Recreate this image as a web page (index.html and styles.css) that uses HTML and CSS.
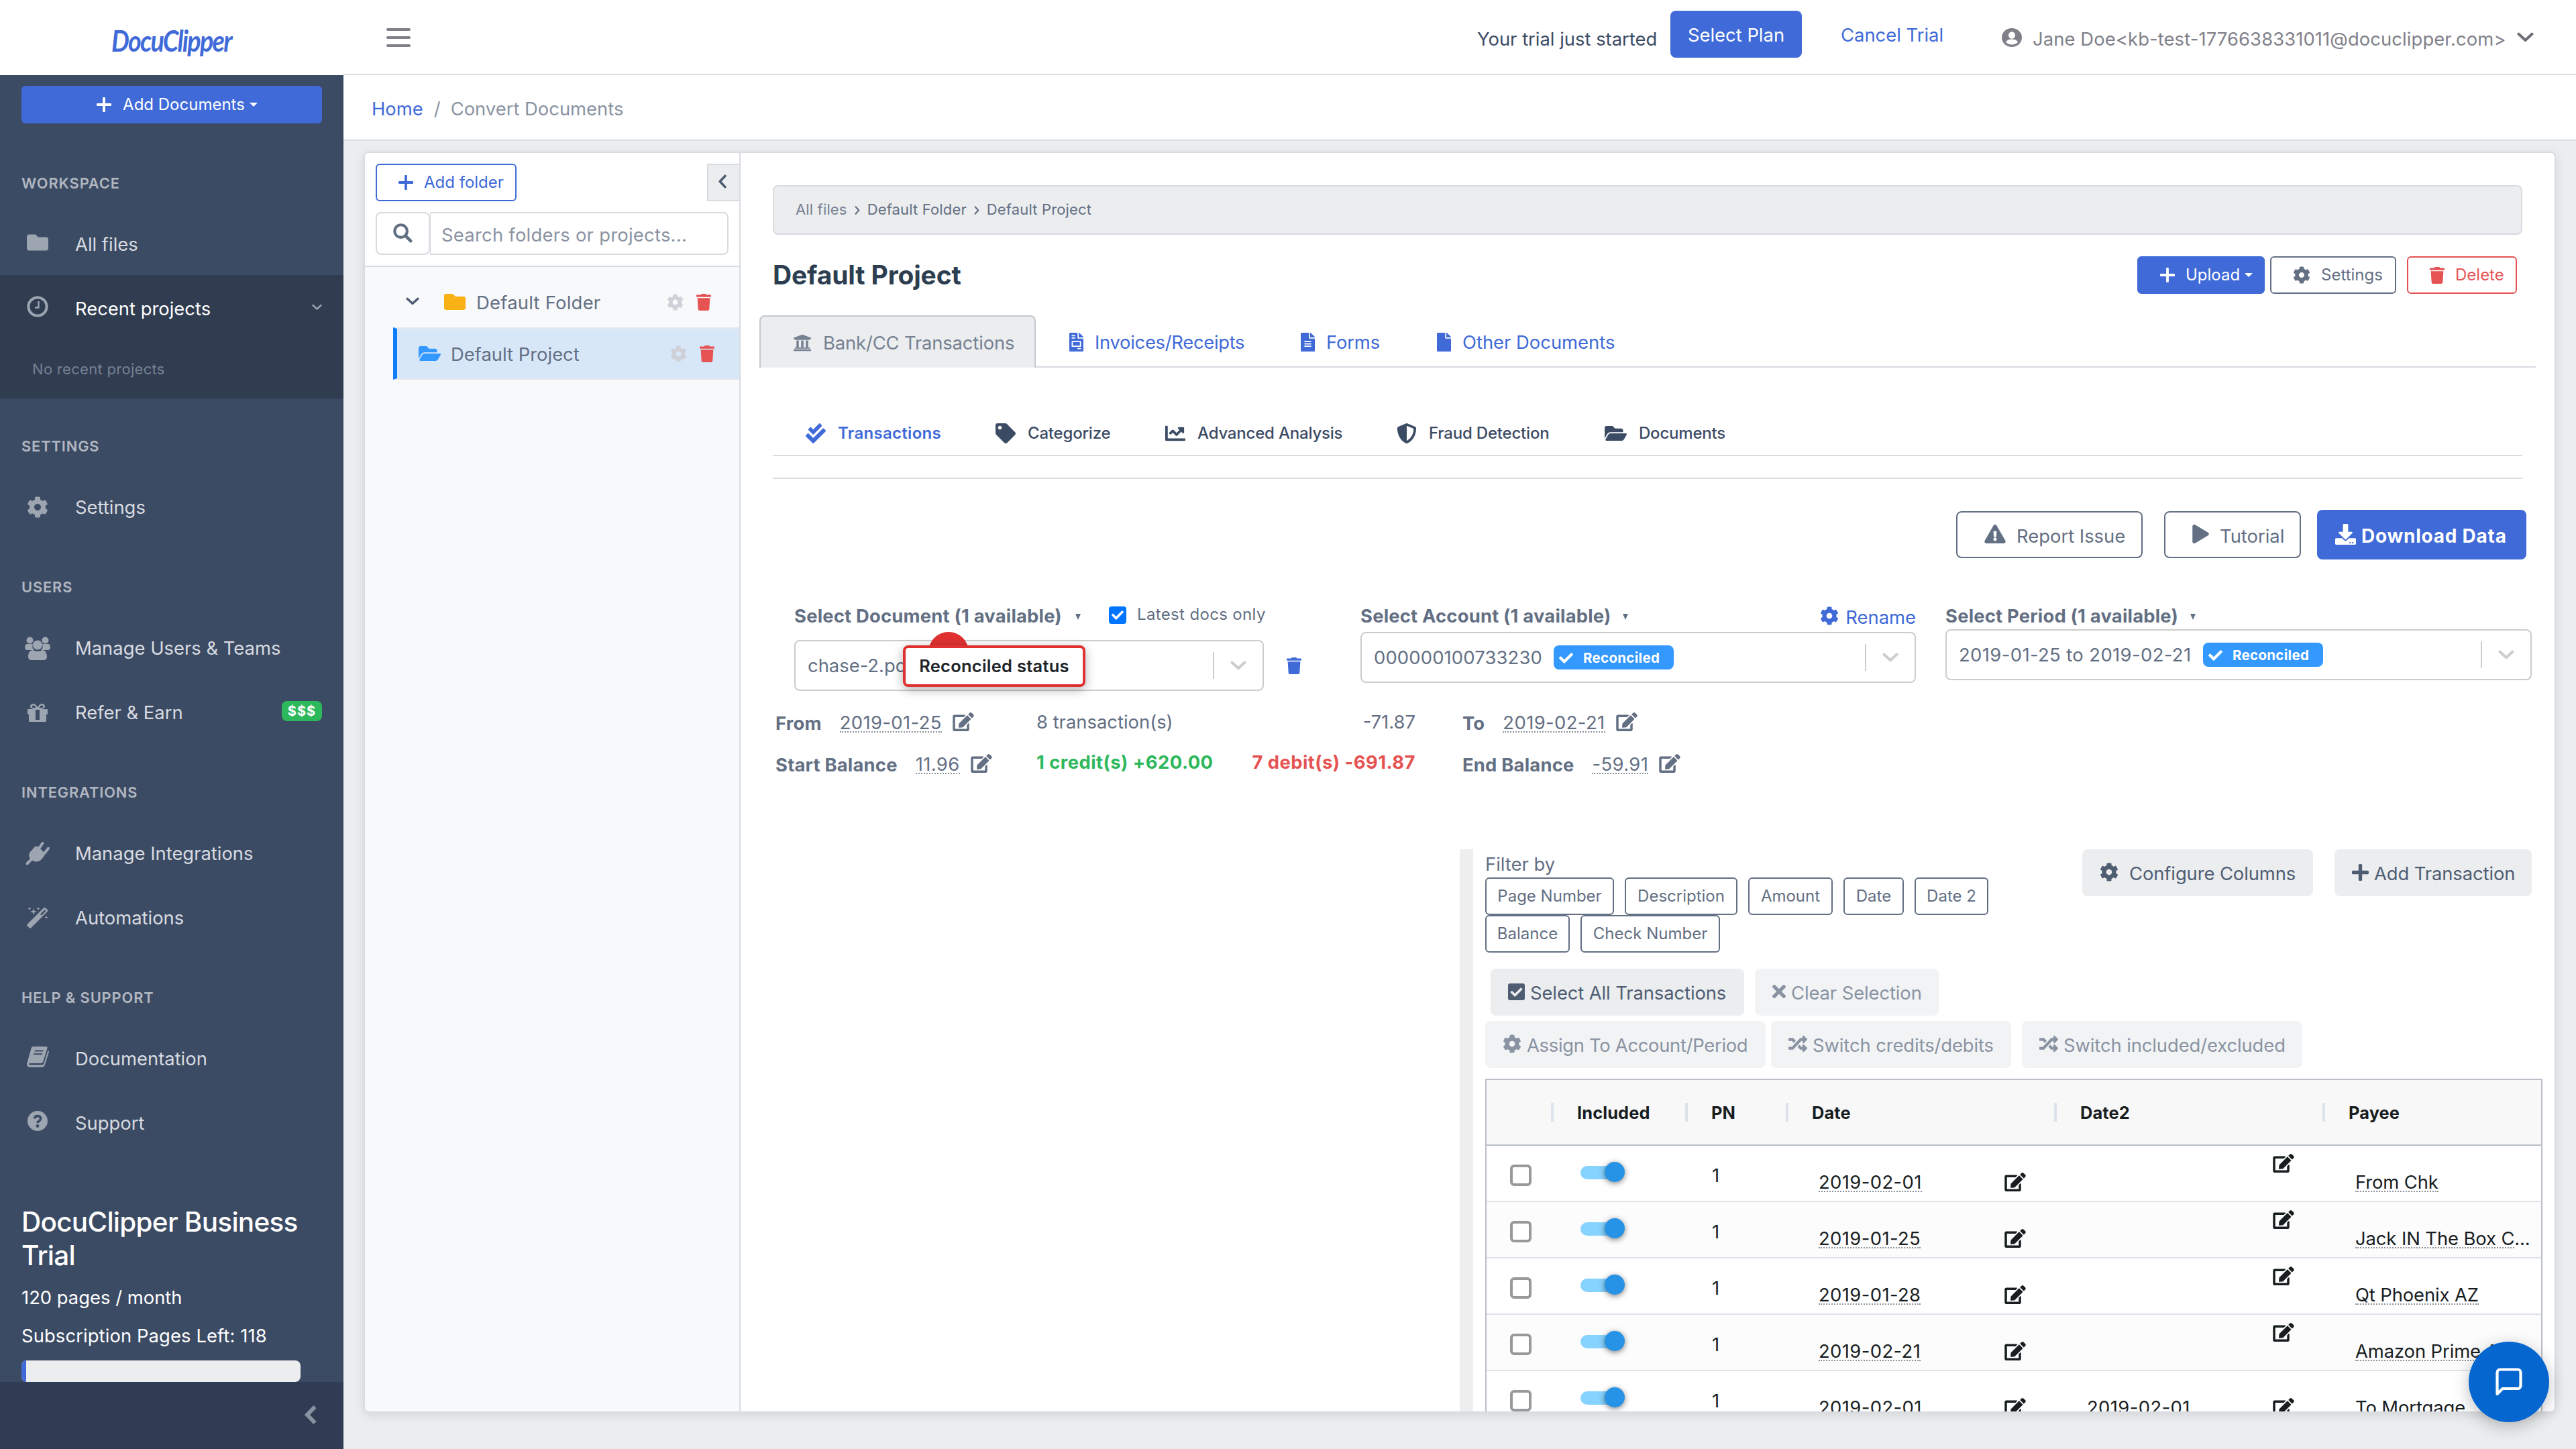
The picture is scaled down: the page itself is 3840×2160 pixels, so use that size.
FILE: index.html
```html
<!DOCTYPE html>
<html lang="en">
<head>
<meta charset="utf-8">
<title>DocuClipper - Convert Documents</title>
<link rel="stylesheet" href="styles.css">
</head>
<body>
<svg class="sprite" xmlns="http://www.w3.org/2000/svg">
  <symbol id="cog" viewBox="0 0 512 512"><path d="M487.4 315.7l-42.6-24.6c4.3-23.2 4.3-47 0-70.2l42.6-24.6c4.9-2.8 7.1-8.6 5.5-14-11.1-35.6-30-67.8-54.7-94.6-3.8-4.1-10-5.1-14.8-2.3L380.8 110c-17.9-15.4-38.5-27.3-60.8-35.1V25.8c0-5.6-3.9-10.5-9.4-11.7-36.7-8.2-74.3-7.8-109.2 0-5.5 1.2-9.4 6.1-9.4 11.7V75c-22.2 7.9-42.8 19.8-60.8 35.1L88.7 85.5c-4.9-2.8-11-1.9-14.8 2.3-24.7 26.7-43.6 58.9-54.7 94.6-1.7 5.4.6 11.2 5.5 14L67.3 221c-4.3 23.2-4.3 47 0 70.2l-42.6 24.6c-4.9 2.8-7.1 8.6-5.5 14 11.1 35.6 30 67.8 54.7 94.6 3.8 4.1 10 5.1 14.8 2.3l42.6-24.6c17.9 15.4 38.5 27.3 60.8 35.1v49.2c0 5.6 3.9 10.5 9.4 11.7 36.7 8.2 74.3 7.8 109.2 0 5.5-1.2 9.4-6.1 9.4-11.7v-49.2c22.2-7.9 42.8-19.8 60.8-35.1l42.6 24.6c4.9 2.8 11 1.9 14.8-2.3 24.7-26.7 43.6-58.9 54.7-94.6 1.5-5.5-.7-11.3-5.6-14.1zM256 336c-44.1 0-80-35.9-80-80s35.9-80 80-80 80 35.9 80 80-35.9 80-80 80z"/></symbol>
  <symbol id="trash" viewBox="0 0 448 512"><path d="M432 32H312l-9.4-18.7A24 24 0 0 0 281.1 0H166.8a23.72 23.72 0 0 0-21.4 13.3L136 32H16A16 16 0 0 0 0 48v32a16 16 0 0 0 16 16h416a16 16 0 0 0 16-16V48a16 16 0 0 0-16-16zM53.2 467a48 48 0 0 0 47.9 45h245.8a48 48 0 0 0 47.9-45L416 128H32z"/></symbol>
  <symbol id="folder" viewBox="0 64 512 384"><path d="M464 128H272l-64-64H48C21.49 64 0 85.49 0 112v288c0 26.51 21.49 48 48 48h416c26.51 0 48-21.49 48-48V176c0-26.51-21.49-48-48-48z"/></symbol>
  <symbol id="folder-open" viewBox="0 64 576 384"><path d="M572.694 292.093L500.27 416.248A63.997 63.997 0 0 1 444.989 448H45.025c-18.523 0-30.064-20.093-20.731-36.093l72.424-124.155A64 64 0 0 1 152 256h399.964c18.523 0 30.064 20.093 20.73 36.093zM152 224h328v-48c0-26.51-21.49-48-48-48H272l-64-64H48C21.49 64 0 85.49 0 112v278.046l69.077-118.418C86.214 242.25 117.989 224 152 224z"/></symbol>
  <symbol id="plus" viewBox="0 32 448 448"><path d="M416 208H272V64c0-17.67-14.33-32-32-32h-32c-17.67 0-32 14.33-32 32v144H32c-17.67 0-32 14.33-32 32v32c0 17.67 14.33 32 32 32h144v144c0 17.67 14.33 32 32 32h32c17.67 0 32-14.33 32-32V304h144c17.67 0 32-14.33 32-32v-32c0-17.67-14.33-32-32-32z"/></symbol>
  <symbol id="plus-thin" viewBox="0 0 22 22"><path d="M9.1 1.400a1.900 1.900 0 0 1 3.800 0v7.700h7.700a1.900 1.900 0 0 1 0 3.800h-7.700v7.700a1.900 1.900 0 0 1-3.800 0v-7.700H1.400a1.900 1.900 0 0 1 0-3.800h7.700z"/></symbol>
  <symbol id="edit" viewBox="0 0 576 512"><path d="M402.6 83.2l90.2 90.2c3.8 3.8 3.8 10 0 13.8L274.4 405.6l-92.8 10.3c-12.4 1.4-22.9-9.1-21.5-21.5l10.3-92.8L388.8 83.2c3.8-3.8 10-3.8 13.8 0zm162-22.9l-48.8-48.8c-15.2-15.2-39.9-15.2-55.2 0l-35.4 35.4c-3.8 3.8-3.8 10 0 13.8l90.2 90.2c3.8 3.8 10 3.8 13.8 0l35.4-35.4c15.2-15.3 15.2-40 0-55.2zM384 346.2V448H64V128h229.8c3.2 0 6.2-1.3 8.5-3.5l40-40c7.6-7.6 2.2-20.5-8.5-20.5H48C21.5 64 0 85.5 0 112v352c0 26.5 21.5 48 48 48h352c26.5 0 48-21.5 48-48V306.2c0-10.7-12.9-16-20.5-8.5l-40 40c-2.2 2.3-3.5 5.3-3.5 8.5z"/></symbol>
  <symbol id="check-double" viewBox="0 0 512 512"><path d="M505 174.8l-39.6-39.6c-9.4-9.4-24.6-9.4-33.9 0L192 374.7 80.6 263.2c-9.4-9.4-24.6-9.4-33.9 0L7 302.9c-9.4 9.4-9.4 24.6 0 34L175 505c9.4 9.4 24.6 9.4 33.9 0l296-296.2c9.4-9.5 9.4-24.7.1-34zm-324.3 106c6.2 6.3 16.4 6.3 22.6 0l208-208.2c6.2-6.3 6.2-16.4 0-22.6L366.1 4.7c-6.2-6.3-16.4-6.3-22.6 0L192 156.2l-55.4-55.5c-6.2-6.3-16.4-6.3-22.6 0L68.7 146c-6.2 6.3-6.2 16.4 0 22.6l112 112.2z"/></symbol>
  <symbol id="tag" viewBox="0 0 512 512"><path d="M0 252.118V48C0 21.49 21.49 0 48 0h204.118a48 48 0 0 1 33.941 14.059l211.882 211.882c18.745 18.745 18.745 49.137 0 67.882L293.823 497.941c-18.745 18.745-49.137 18.745-67.882 0L14.059 286.059A48 48 0 0 1 0 252.118zM112 64c-26.51 0-48 21.49-48 48s21.49 48 48 48 48-21.49 48-48-21.49-48-48-48z"/></symbol>
  <symbol id="chart" viewBox="0 0 512 512"><path d="M496 384H64V80c0-8.84-7.16-16-16-16H16C7.16 64 0 71.16 0 80v336c0 17.67 14.33 32 32 32h464c8.84 0 16-7.16 16-16v-32c0-8.84-7.16-16-16-16zM464 96H345.94c-21.38 0-32.09 25.85-16.97 40.97l32.4 32.4L288 242.75l-73.37-73.37c-12.5-12.5-32.76-12.5-45.25 0l-68.69 68.69c-6.25 6.25-6.25 16.38 0 22.63l22.62 22.62c6.25 6.25 16.38 6.25 22.63 0L192 237.25l73.37 73.37c12.5 12.5 32.76 12.5 45.25 0l96-96 32.4 32.4c15.12 15.12 40.97 4.41 40.97-16.97V112c.01-8.84-7.15-16-15.99-16z"/></symbol>
  <symbol id="shield" viewBox="0 0 512 512"><path d="M466.5 83.7l-192-80a48.15 48.15 0 0 0-36.9 0l-192 80C27.7 91.1 16 108.6 16 128c0 198.5 114.5 335.7 221.5 380.3 11.8 4.9 25.1 4.9 36.9 0C360.1 472.6 496 349.3 496 128c0-19.4-11.7-36.9-29.5-44.3zM256.1 446.3l-.1-381 175.9 73.3c-3.3 151.4-82.1 261.1-175.8 307.7z"/></symbol>
  <symbol id="warning" viewBox="0 0 576 512"><path d="M569.517 440.013C587.975 472.007 564.806 512 527.94 512H48.054c-36.937 0-59.999-40.055-41.577-71.987L246.423 23.985c18.467-32.009 64.72-31.951 83.154 0l239.94 416.028zM288 354c-25.405 0-46 20.595-46 46s20.595 46 46 46 46-20.595 46-46-20.595-46-46-46zm-43.673-165.346l7.418 136c.347 6.364 5.609 11.346 11.982 11.346h48.546c6.373 0 11.635-4.982 11.982-11.346l7.418-136c.375-6.874-5.098-12.654-11.982-12.654h-63.383c-6.884 0-12.356 5.78-11.981 12.654z"/></symbol>
  <symbol id="play" viewBox="0 0 448 512"><path d="M424.4 214.7L72.4 6.6C43.8-10.3 0 6.1 0 47.9V464c0 37.5 40.7 60.1 72.4 41.3l352-208c31.4-18.5 31.5-64.1 0-82.6z"/></symbol>
  <symbol id="download" viewBox="0 0 512 512"><path d="M216 0h80c13.3 0 24 10.7 24 24v168h87.7c17.8 0 26.7 21.5 14.1 34.1L269.7 378.3c-7.5 7.5-19.8 7.5-27.3 0L90.1 226.1c-12.6-12.6-3.7-34.1 14.1-34.1H192V24c0-13.3 10.7-24 24-24zm296 376v112c0 13.3-10.7 24-24 24H24c-13.3 0-24-10.7-24-24V376c0-13.3 10.7-24 24-24h146.7l49 49c20.1 20.1 52.5 20.1 72.6 0l49-49H488c13.3 0 24 10.7 24 24zm-124 88c0-11-9-20-20-20s-20 9-20 20 9 20 20 20 20-9 20-20zm64 0c0-11-9-20-20-20s-20 9-20 20 9 20 20 20 20-9 20-20z"/></symbol>
  <symbol id="check-square" viewBox="0 32 448 448"><path d="M400 480H48c-26.51 0-48-21.49-48-48V80c0-26.51 21.49-48 48-48h352c26.51 0 48 21.49 48 48v352c0 26.51-21.49 48-48 48zm-204.686-98.059l184-184c6.248-6.248 6.248-16.379 0-22.627l-22.627-22.627c-6.248-6.248-16.379-6.249-22.628 0L184 302.745l-70.059-70.059c-6.248-6.248-16.379-6.248-22.628 0l-22.627 22.627c-6.248 6.248-6.248 16.379 0 22.627l104 104c6.249 6.25 16.379 6.25 22.628.001z"/></symbol>
  <symbol id="times" viewBox="0 80 352 352"><path d="M242.72 256l100.07-100.07c12.28-12.28 12.28-32.19 0-44.48l-22.24-22.24c-12.28-12.28-32.19-12.28-44.48 0L176 189.28 75.93 89.21c-12.28-12.28-32.19-12.28-44.48 0L9.21 111.45c-12.28 12.28-12.28 32.19 0 44.48L109.28 256 9.21 356.07c-12.28 12.28-12.28 32.19 0 44.48l22.24 22.24c12.28 12.28 32.2 12.28 44.48 0L176 322.72l100.07 100.07c12.28 12.28 32.2 12.28 44.48 0l22.24-22.24c12.28-12.28 12.28-32.19 0-44.48L242.72 256z"/></symbol>
  <symbol id="random" viewBox="0 0 512 512"><path d="M504.971 359.029c9.373 9.373 9.373 24.569 0 33.941l-80 79.984c-15.01 15.01-40.971 4.49-40.971-16.971V416h-58.785a12.004 12.004 0 0 1-8.773-3.812l-70.556-75.596 53.333-57.143L352 336h32v-39.981c0-21.438 25.943-31.998 40.971-16.971l80 79.981zM12 176h84l52.781 56.551 53.333-57.143-70.556-75.596A11.999 11.999 0 0 0 122.785 96H12c-6.627 0-12 5.373-12 12v56c0 6.627 5.373 12 12 12zm372 0v39.984c0 21.46 25.961 31.98 40.971 16.971l80-79.984c9.373-9.373 9.373-24.569 0-33.941l-80-79.981C409.943 24.021 384 34.582 384 56.019V96h-58.785a12.004 12.004 0 0 0-8.773 3.812L96 336H12c-6.627 0-12 5.373-12 12v56c0 6.627 5.373 12 12 12h110.785c3.326 0 6.503-1.381 8.773-3.812L352 176h32z"/></symbol>
  <symbol id="bank" viewBox="0 0 512 512"><path d="M496 128v16a8 8 0 0 1-8 8h-24v12c0 6.627-5.373 12-12 12H60c-6.627 0-12-5.373-12-12v-12H24a8 8 0 0 1-8-8v-16a8 8 0 0 1 4.941-7.392l232-88a7.996 7.996 0 0 1 6.118 0l232 88A8 8 0 0 1 496 128zm-24 304H40c-13.255 0-24 10.745-24 24v16a8 8 0 0 0 8 8h464a8 8 0 0 0 8-8v-16c0-13.255-10.745-24-24-24zM96 192v192H60c-6.627 0-12 5.373-12 12v20h416v-20c0-6.627-5.373-12-12-12h-36V192h-64v192h-64V192h-64v192h-64V192H96z"/></symbol>
  <symbol id="file" viewBox="0 0 384 512"><path d="M224 136V0H24C10.7 0 0 10.7 0 24v464c0 13.3 10.7 24 24 24h336c13.3 0 24-10.7 24-24V160H248c-13.2 0-24-10.8-24-24zm160-14.1v6.1H256V0h6.1c6.4 0 12.5 2.5 17 7l97.9 98c4.5 4.5 7 10.6 7 16.9z"/></symbol>
  <symbol id="file-lines" viewBox="0 0 384 512"><path d="M224 136V0H24C10.7 0 0 10.7 0 24v464c0 13.3 10.7 24 24 24h336c13.3 0 24-10.7 24-24V160H248c-13.2 0-24-10.8-24-24zm64 236c0 6.6-5.4 12-12 12H108c-6.6 0-12-5.4-12-12v-8c0-6.6 5.4-12 12-12h168c6.6 0 12 5.4 12 12v8zm0-64c0 6.6-5.4 12-12 12H108c-6.6 0-12-5.4-12-12v-8c0-6.6 5.4-12 12-12h168c6.6 0 12 5.4 12 12v8zm0-72v8c0 6.6-5.4 12-12 12H108c-6.6 0-12-5.4-12-12v-8c0-6.6 5.4-12 12-12h168c6.6 0 12 5.4 12 12zm96-114.1v6.1H256V0h6.1c6.4 0 12.5 2.5 17 7l97.9 98c4.5 4.5 7 10.6 7 16.9z"/></symbol>
  <symbol id="file-invoice" viewBox="0 0 384 512"><path fill-rule="evenodd" d="M224 136V0H24C10.7 0 0 10.7 0 24v464c0 13.3 10.7 24 24 24h336c13.3 0 24-10.7 24-24V160H248c-13.2 0-24-10.8-24-24zM64 64h96v32H64zM64 128h96v32H64zM224 416h96v32h-96zM80 224h224a16 16 0 0 1 16 16v128a16 16 0 0 1-16 16H80a16 16 0 0 1-16-16V240a16 16 0 0 1 16-16zM96 256v96h192v-96zM384 121.9v6.100H256V0h6.100c6.400 0 12.500 2.500 17 7l97.900 98c4.500 4.500 7 10.600 7 16.900z"/></symbol>
  <symbol id="check" viewBox="0 64 512 384"><path d="M173.898 439.404l-166.4-166.4c-9.997-9.997-9.997-26.206 0-36.204l36.203-36.204c9.997-9.998 26.207-9.998 36.204 0L192 312.69 432.095 72.596c9.997-9.997 26.207-9.997 36.204 0l36.203 36.204c9.997 9.997 9.997 26.206 0 36.204l-294.4 294.401c-9.998 9.997-26.207 9.997-36.204-.001z"/></symbol>
  <symbol id="search" viewBox="0 0 30 30"><g fill="none" stroke="currentColor"><circle cx="12" cy="12" r="9.6" stroke-width="4.2"/><path d="M19 19l8 8" stroke-width="5" stroke-linecap="round"/></g></symbol>
  <symbol id="chev-down" viewBox="0 0 24 14"><path d="M2.500 2.500L12 11.300l9.500-8.800" fill="none" stroke="currentColor" stroke-width="4" stroke-linecap="round" stroke-linejoin="round"/></symbol>
  <symbol id="chev-left" viewBox="0 0 14 24"><path d="M11.500 2.500L2.700 12l8.800 9.500" fill="none" stroke="currentColor" stroke-width="4" stroke-linecap="round" stroke-linejoin="round"/></symbol>
  <symbol id="clock" viewBox="0 0 32 32"><circle cx="16" cy="16" r="13.600" fill="none" stroke="currentColor" stroke-width="4"/><path d="M17.500 8v9.500H12" fill="none" stroke="currentColor" stroke-width="2.400"/></symbol>
  <symbol id="users" viewBox="0 0 38 35"><circle cx="7.500" cy="5.500" r="5"/><circle cx="30.500" cy="5.500" r="5"/><path d="M3 11h9c-1.500 5 0 8 2 9H4c-3 0-4-1.500-4-4s1-5 3-5zM35 11h-9c1.500 5 0 8-2 9h10c3 0 4-1.500 4-4s-1-5-3-5z"/><circle cx="19" cy="12.500" r="7"/><path d="M12 20c4 2.500 10 2.500 14 0 4 0 7 4 7 10 0 3-2 5-5 5H10c-3 0-5-2-5-5 0-6 3-10 7-10z"/></symbol>
  <symbol id="gift" viewBox="0 0 30 27"><path fill-rule="evenodd" d="M1 8h9.500C6 7.500 4 6 4 4c0-2.300 1.800-4 4.300-4 3 0 5 2.500 6.700 5.300C16.700 2.500 18.700 0 21.700 0 24.200 0 26 1.700 26 4c0 2-2 3.500-6.500 4H29c.6 0 1 .4 1 1v7h-2v9.500c0 .8-.7 1.500-1.500 1.500h-23c-.8 0-1.500-.7-1.500-1.500V16H0V9c0-.6.4-1 1-1zm7.300-5.600a1.700 1.700 0 0 0 0 3.500h4.300c-1-2-2.400-3.500-4.300-3.500zm13.400 0c-1.900 0-3.300 1.500-4.300 3.500h4.300a1.700 1.700 0 0 0 0-3.500zM12 9v15h6V9z"/></symbol>
  <symbol id="plug" viewBox="0 0 36 35"><path d="M9 13l4-5c2-2 5-2 7 0l7 7c2 2 2 5 0 7l-3 4c-4 4-10 4.500-14 1.500L4 34c-1.500 1.500-4.500-.5-3.200-3L7 25c-3-4-2-9 2-12z"/><path d="M19.500 10.500l6-8.500M28 17.500l6-8" fill="none" stroke="currentColor" stroke-width="4" stroke-linecap="round"/></symbol>
  <symbol id="wand" viewBox="0 0 32 32"><path fill-rule="evenodd" d="M25 1.500c1-1 2-1 3 0l2.500 2.500c1 1 1 2 0 3L6.500 31c-1 1-2 1-3 0L1 28.500c-1-1-1-2 0-3zm1.500 2.800L20 11l1.800 1.800 6.500-6.700z"/><path d="M10 2l1.200 3.800L15 7l-3.800 1.200L10 12 8.800 8.200 5 7l3.800-1.200zM4 0l.7 1.800L6.500 2.500l-1.800.7L4 5l-.7-1.800L1.500 2.500l1.800-.7zM17 0l.7 1.800 1.800.7-1.800.7L17 5l-.7-1.800-1.800-.7 1.800-.7zM29 13l.7 1.800 1.800.7-1.800.7L29 18l-.7-1.800-1.800-.7 1.800-.7z"/></symbol>
  <symbol id="book" viewBox="0 0 33 31"><path fill-rule="evenodd" d="M10 0h18.500c1.500 0 2.500 1 2 2.500l-6 19.500c-.6 1.700-2 3-4 3H4.500c-2 0-2 2.500 0 2.500H23c1 0 2-.6 2.400-1.700L31.500 6c1.400.6 1.600 1.800 1.200 3l-6 18.800c-.6 1.900-2 3.200-4.200 3.200H5c-3.500 0-6-3-4.700-6.200L6.500 3C7 1.200 8.200 0 10 0zm2 5.500l-.6 2h12.800l.6-2zm-1.500 4.700l-.6 2h12.800l.6-2z"/></symbol>
  <symbol id="help" viewBox="0 0 30 30"><circle cx="15" cy="15" r="15"/><path d="M10.500 11.500c.4-2.500 2.300-3.900 4.600-3.900 2.600 0 4.600 1.500 4.600 3.900 0 3.400-4.600 3.400-4.600 6.500" fill="none" stroke="#3c4b64" stroke-width="3.600"/><circle cx="15" cy="22.500" r="2.400" fill="#3c4b64"/></symbol>
  <symbol id="user" viewBox="0 0 30 28"><ellipse cx="15" cy="14" rx="15" ry="14"/><ellipse cx="15" cy="10.500" rx="5" ry="5.200" fill="#fff"/><path d="M6 21c2-4 5-4.600 9-4.600s7 .6 9 4.600c-5 4.600-13 4.600-18 0z" fill="#fff"/></symbol>
</svg>

<aside class="sidebar">
  <div class="brand"><span class="logo">DocuClipper</span></div>
  <nav class="nav">
    <button class="btn-add"><svg width="22" height="22"><use href="#plus-thin"/></svg><span>Add Documents</span><i class="caret"></i></button>
    <div class="nav-title">WORKSPACE</div>
    <a class="nav-item"><span class="ic"><svg width="32" height="27" class="up"><use href="#folder"/></svg></span>All files</a>
    <div class="nav-group">
      <a class="nav-item active"><span class="ic"><svg width="32" height="32" class="up"><use href="#clock"/></svg></span>Recent projects<svg class="more" width="15" height="10"><use href="#chev-down"/></svg></a>
      <div class="nav-empty">No recent projects</div>
    </div>
    <div class="nav-title">SETTINGS</div>
    <a class="nav-item"><span class="ic"><svg width="32" height="32"><use href="#cog"/></svg></span>Settings</a>
    <div class="nav-title">USERS</div>
    <a class="nav-item"><span class="ic"><svg width="38" height="35"><use href="#users"/></svg></span>Manage Users &amp; Teams</a>
    <a class="nav-item"><span class="ic"><svg width="30" height="27"><use href="#gift"/></svg></span>Refer &amp; Earn<span class="money">$$$</span></a>
    <div class="nav-title">INTEGRATIONS</div>
    <a class="nav-item"><span class="ic"><svg width="36" height="35"><use href="#plug"/></svg></span>Manage Integrations</a>
    <a class="nav-item"><span class="ic"><svg width="32" height="32"><use href="#wand"/></svg></span>Automations</a>
    <div class="nav-title">HELP &amp; SUPPORT</div>
    <a class="nav-item"><span class="ic"><svg width="33" height="31" class="up"><use href="#book"/></svg></span>Documentation</a>
    <a class="nav-item"><span class="ic"><svg width="30" height="30" class="up"><use href="#help"/></svg></span>Support</a>
    <div class="plan">
      <h4>DocuClipper Business<br>Trial</h4>
      <p>120 pages / month</p>
      <p>Subscription Pages Left: 118</p>
      <div class="progress"><div class="progress-bar" style="width:1.600%"></div></div>
    </div>
  </nav>
  <div class="minimizer"><svg width="20" height="30" viewBox="0 0 20 30"><path d="M16.500 3L5 15l11.500 12" fill="none" stroke="currentColor" stroke-width="6"/></svg></div>
</aside>

<div class="main">
  <header class="topbar">
    <div class="burger"><i></i><i></i><i></i></div>
    <span class="trial">Your trial just started</span>
    <button class="btn-plan">Select Plan</button>
    <a class="cancel">Cancel Trial</a>
    <svg class="avatar" width="30" height="28"><use href="#user"/></svg>
    <span class="who">Jane Doe&lt;kb-test-1776638331011@docuclipper.com&gt;</span>
    <svg class="who-chev" width="25" height="15"><use href="#chev-down"/></svg>
  </header>
  <div class="crumbs"><a>Home</a><span class="slash">/</span><span>Convert Documents</span></div>

  <section class="card">
    <aside class="tree">
      <div class="tree-head">
        <div class="tree-tools">
          <button class="btn-folder"><svg width="22" height="22"><use href="#plus-thin"/></svg><span>Add folder</span></button>
          <button class="btn-collapse"><svg width="14" height="21"><use href="#chev-left"/></svg></button>
        </div>
        <div class="search"><span class="search-ic"><svg width="29" height="29"><use href="#search"/></svg></span><span class="search-in">Search folders or projects...</span></div>
      </div>
      <div class="t-row">
        <svg class="t-chev" width="20" height="12"><use href="#chev-down"/></svg>
        <svg class="t-folder" width="32" height="24"><use href="#folder"/></svg>
        <span class="t-name wide">Default Folder</span>
        <svg class="t-cog" width="25" height="25"><use href="#cog"/></svg>
        <svg class="t-trash" width="22" height="25"><use href="#trash"/></svg>
      </div>
      <div class="t-row sel">
        <svg class="t-open" width="33" height="22"><use href="#folder-open"/></svg>
        <span class="t-name">Default Project</span>
        <svg class="t-cog" width="25" height="25"><use href="#cog"/></svg>
        <svg class="t-trash" width="22" height="25"><use href="#trash"/></svg>
      </div>
    </aside>

    <div class="work">
      <div class="path"><span>All files</span><svg width="8" height="13"><use href="#chev-left"/></svg><b>Default Folder</b><svg width="8" height="13"><use href="#chev-left"/></svg><b>Default Project</b></div>
      <div class="title-row">
        <h1>Default Project</h1>
        <button class="sm upload"><svg width="22" height="22"><use href="#plus-thin"/></svg><span>Upload</span><i class="caret"></i></button>
        <button class="sm gray"><svg width="26" height="26"><use href="#cog"/></svg><span>Settings</span></button>
        <button class="sm red"><svg width="22" height="25"><use href="#trash"/></svg><span>Delete</span></button>
      </div>
      <div class="tabs">
        <a class="tab on"><svg width="28" height="28"><use href="#bank"/></svg>Bank/CC Transactions</a>
        <a class="tab"><svg width="21" height="28"><use href="#file-invoice"/></svg>Invoices/Receipts</a>
        <a class="tab"><svg width="21" height="28"><use href="#file-lines"/></svg>Forms</a>
        <a class="tab"><svg width="21" height="28"><use href="#file"/></svg>Other Documents</a>
      </div>
      <div class="subtabs">
        <a class="on"><svg width="30" height="30"><use href="#check-double"/></svg>Transactions</a>
        <a><svg width="30" height="30"><use href="#tag"/></svg>Categorize</a>
        <a><svg width="30" height="30"><use href="#chart"/></svg>Advanced Analysis</a>
        <a><svg width="30" height="30"><use href="#shield"/></svg>Fraud Detection</a>
        <a><svg width="33" height="22"><use href="#folder-open"/></svg>Documents</a>
      </div>
      <div class="rule"></div>
      <div class="actions">
        <button class="act report"><svg width="32" height="28"><use href="#warning"/></svg><span>Report Issue</span></button>
        <button class="act tutorial"><svg width="25" height="28"><use href="#play"/></svg><span>Tutorial</span></button>
        <button class="act dl"><svg width="31" height="31"><use href="#download"/></svg><span>Download Data</span></button>
      </div>

      <div class="filters">
        <div class="f-doc">
          <div class="f-label"><strong>Select Document (1 available)</strong><i class="caret s"></i><span class="cb"><svg width="18" height="14"><use href="#check"/></svg></span><span class="latest">Latest docs only</span></div>
          <div class="f-line">
            <div class="select"><span>chase-2.pdf</span><i class="sep"></i><svg class="s-chev" width="24" height="14"><use href="#chev-down"/></svg>
              <div class="dot"></div><div class="tip">Reconciled status</div>
            </div>
            <svg class="del" width="22" height="25"><use href="#trash"/></svg>
          </div>
        </div>
        <div class="f-acc">
          <div class="f-label"><strong>Select Account (1 available)</strong><i class="caret s"></i><span class="rename"><svg width="28" height="28"><use href="#cog"/></svg>Rename</span></div>
          <div class="select"><span class="acc">000000100733230</span><em class="badge"><svg width="21" height="16"><use href="#check"/></svg>Reconciled</em><i class="sep"></i><svg class="s-chev" width="24" height="14"><use href="#chev-down"/></svg></div>
        </div>
        <div class="f-per">
          <div class="f-label"><strong>Select Period (1 available)</strong><i class="caret s"></i></div>
          <div class="select"><span class="per">2019-01-25 to 2019-02-21</span><em class="badge"><svg width="21" height="16"><use href="#check"/></svg>Reconciled</em><i class="sep"></i><svg class="s-chev" width="24" height="14"><use href="#chev-down"/></svg></div>
        </div>
      </div>

      <div class="summary">
        <div class="s-col a">
          <div><strong>From</strong><u>2019-01-25</u><svg width="32" height="28"><use href="#edit"/></svg></div>
          <div><strong>Start Balance</strong><u>11.96</u><svg width="32" height="28"><use href="#edit"/></svg></div>
        </div>
        <div class="s-col b">
          <div><span>8 transaction(s)</span><span>-71.87</span></div>
          <div><strong class="green">1 credit(s) +620.00</strong><strong class="redt">7 debit(s) -691.87</strong></div>
        </div>
        <div class="s-col c">
          <div><strong>To</strong><u>2019-02-21</u><svg width="32" height="28"><use href="#edit"/></svg></div>
          <div><strong>End Balance</strong><u>-59.91</u><svg width="32" height="28"><use href="#edit"/></svg></div>
        </div>
      </div>

      <div class="lower">
        <div class="gutter"></div>
        <div class="grid-side">
          <div class="g-top">
            <div class="filter-by">
              <div class="fb-label">Filter by</div>
              <div class="chips"><button class="w1">Page Number</button><button class="w2">Description</button><button class="w3">Amount</button><button class="w4">Date</button><button class="w5">Date 2</button><button class="w6">Balance</button><button class="w7">Check Number</button></div>
            </div>
            <button class="lt conf"><svg width="28" height="28"><use href="#cog"/></svg>Configure Columns</button>
            <button class="lt addt"><svg width="25" height="25"><use href="#plus"/></svg>Add Transaction</button>
          </div>
          <div class="g-sel">
            <button class="lt all"><svg width="25" height="25"><use href="#check-square"/></svg>Select All Transactions</button>
            <button class="lt off clr"><svg width="20" height="20"><use href="#times"/></svg>Clear Selection</button>
          </div>
          <div class="g-bulk">
            <button class="lt off asg"><svg width="28" height="28"><use href="#cog"/></svg>Assign To Account/Period</button>
            <button class="lt off swc"><svg width="28" height="28"><use href="#random"/></svg>Switch credits/debits</button>
            <button class="lt off swi"><svg width="28" height="28"><use href="#random"/></svg>Switch included/excluded</button>
          </div>
          <div class="table">
            <div class="tr th"><div><i></i></div><div>Included<i></i></div><div>PN<i></i></div><div>Date<i></i></div><div>Date2<i></i></div><div>Payee</div></div>
            <div class="tr"><div class="c0"><i class="box"></i></div><div class="c1"><i class="toggle"></i></div><div class="c2">1</div><div class="c3"><u>2019-02-01</u><svg width="32" height="28"><use href="#edit"/></svg></div><div class="c3 empty"><svg width="32" height="28"><use href="#edit"/></svg></div><div class="c3 payee"><u>From Chk</u></div></div>
            <div class="tr odd"><div class="c0"><i class="box"></i></div><div class="c1"><i class="toggle"></i></div><div class="c2">1</div><div class="c3"><u>2019-01-25</u><svg width="32" height="28"><use href="#edit"/></svg></div><div class="c3 empty"><svg width="32" height="28"><use href="#edit"/></svg></div><div class="c3 payee"><u>Jack IN The Box C</u><span>...</span></div></div>
            <div class="tr"><div class="c0"><i class="box"></i></div><div class="c1"><i class="toggle"></i></div><div class="c2">1</div><div class="c3"><u>2019-01-28</u><svg width="32" height="28"><use href="#edit"/></svg></div><div class="c3 empty"><svg width="32" height="28"><use href="#edit"/></svg></div><div class="c3 payee"><u>Qt Phoenix AZ</u></div></div>
            <div class="tr odd"><div class="c0"><i class="box"></i></div><div class="c1"><i class="toggle"></i></div><div class="c2">1</div><div class="c3"><u>2019-02-21</u><svg width="32" height="28"><use href="#edit"/></svg></div><div class="c3 empty"><svg width="32" height="28"><use href="#edit"/></svg></div><div class="c3 payee"><u>Amazon Prime A</u></div></div>
            <div class="tr"><div class="c0"><i class="box"></i></div><div class="c1"><i class="toggle"></i></div><div class="c2">1</div><div class="c3"><u>2019-02-01</u><svg width="32" height="28"><use href="#edit"/></svg></div><div class="c3"><u>2019-02-01</u><svg width="32" height="28"><use href="#edit"/></svg></div><div class="c3 payee"><u>To Mortgage</u></div></div>
          </div>
        </div>
      </div>
    </div>
  </section>
</div>
<div class="chat"><svg width="44" height="44" viewBox="0 0 44 44"><path d="M4.500 40V8a4.500 4.500 0 0 1 4.500-4.500h26A4.500 4.500 0 0 1 39.500 8v19.500A4.500 4.500 0 0 1 35 32H12.500z" fill="none" stroke="#fff" stroke-width="4.200" stroke-linejoin="round"/></svg></div>
</body>
</html>
```
FILE: styles.css
```css
* { box-sizing: border-box; }
html, body { margin: 0; height: 2160px; overflow: hidden; }
body {
  display: flex; width: 3840px; background: #ebedef; color: #3c4b64;
  font-family: Inter, "Liberation Sans", sans-serif; font-size: 27.400px; line-height: 40px;
}
button { font: inherit; color: inherit; background: none; border: 0; padding: 0; margin: 0; display: flex; align-items: center; white-space: nowrap; flex: none; }
svg { fill: currentColor; flex: none; display: block; }
i { display: block; flex: none; }
strong { font-weight: 700; letter-spacing: .2px; }
span, strong, u { white-space: nowrap; }
u { text-decoration: none; border-bottom: 2px dotted #8d929a; line-height: 25px; height: 27px; letter-spacing: .4px; }
.sprite { position: absolute; width: 0; height: 0; }
.caret { width: 0; height: 0; border: 6px solid transparent; border-top: 6.500px solid currentColor; border-bottom: 0; }
.caret.s { border-width: 9px 4.500px 0; margin: 3px 0 0 11px; }

/* sidebar */
.sidebar { width: 512px; height: 2160px; flex: none; display: flex; flex-direction: column; background: #3c4b64; color: #d8dbe0; }
.brand { height: 112px; flex: none; background: #fff; padding: 34px 0 0 166px; }
.logo { display: block; font-family: Lato, sans-serif; font-style: italic; font-weight: 700; font-size: 43px; line-height: 54px; letter-spacing: -2px; color: #3f6ad8; width: 220px; transform: scaleX(.88); transform-origin: 0 50%; }
.nav { flex: 1; min-height: 0; display: flex; flex-direction: column; padding-top: 16px; overflow: hidden; }
.btn-add { width: 448px; height: 56px; margin: 0 32px 16px; padding-left: 112px; border-radius: 6px; background: #3f6ad8; color: #fff; font-size: 24px; }
.btn-add span { margin-left: 16px; width: 184px; }
.btn-add .caret { margin-left: 6px; }
.nav-title { height: 114px; flex: none; padding: 53px 32px 0; font-size: 21.800px; font-weight: 600; letter-spacing: .9px; color: #b1b7c1; }
.nav-item { height: 96px; flex: none; display: flex; align-items: center; padding: 4px 32px 0 0; }
.nav-item .ic { width: 112px; display: flex; justify-content: center; color: #9da5b1; }
.nav-item .up { position: relative; top: -3px; }
.nav-group { flex: none; background: #303c50; margin-bottom: -2px; height: 184px; }
.nav-item.active { color: #fff; }
.more { margin-left: auto; margin-top: -4px; color: #9da5b1; }
.nav-empty { padding: 24px 48px; font-size: 22px; letter-spacing: .3px; color: #768192; }
.money { margin-left: auto; margin-top: -4px; width: 60px; height: 30px; line-height: 30px; text-align: center; border-radius: 8px; background: #2eb85c; color: #fff; font-size: 20px; font-weight: 700; letter-spacing: 1px; }
.plan { padding: 77px 32px 0; color: #fff; }
.plan h4 { margin: 0; font-size: 40.500px; font-weight: 500; line-height: 50px; letter-spacing: -.75px; white-space: nowrap; }
.plan p { margin: 17px 0 17px; white-space: nowrap; height: 40px; }
.plan p + p { margin: 17px 0 17px; letter-spacing: .1px; }
.progress { width: 416px; height: 32px; border-radius: 8px; background: #ebedef; overflow: hidden; }
.progress-bar { height: 32px; background: #3f6ad8; }
.minimizer { height: 100px; flex: none; background: #303c54; color: #8a93a2; padding: 34px 0 0 453px; }

/* header */
.main { width: 3328px; height: 2160px; display: flex; flex-direction: column; }
.topbar { height: 112px; flex: none; background: #fff; border-bottom: 2px solid #d8dbe0; display: flex; align-items: flex-start; }
.burger { width: 36px; margin: 42px 0 0 64px; display: flex; flex-direction: column; gap: 8px; }
.burger i { height: 4px; border-radius: 2px; background: #807f8a; }
.trial { margin: 38px 0 0 1590px; width: 288px; }
.btn-plan { margin-top: 16px; width: 196px; height: 70px; border-radius: 8px; background: #3f6ad8; color: #fff; justify-content: center; padding-top: 2px; }
.cancel { margin: 32px 0 0 58px; width: 240px; color: #3f6ad8; }
.avatar { margin-top: 42px; color: #80808a; }
.who { margin: 38px 0 0 16px; width: 722px; color: #80808a; letter-spacing: .1px; }
.who-chev { margin-top: 48px; color: #6e6d78; }
.crumbs { height: 98px; flex: none; background: #fff; border-bottom: 2px solid #d8dbe0; padding: 30px 0 0 42px; display: flex; color: #8a93a2; }
.crumbs a { color: #3f6ad8; }
.slash { margin: 0 15px 0 16px; color: #8a93a2; }

/* card */
.card { margin: 16px 30px 0; height: 1880px; width: 3268px; flex: none; display: flex; background: #fff; border: 2px solid #d8dbe0; border-radius: 8px; overflow: hidden; box-shadow: 0 4px 16px rgba(0,0,21,.1); }
.tree { width: 560px; flex: none; border-right: 2px solid #d8dbe0; background: #f8f9fb; }
.tree-head { height: 170px; background: #fff; border-bottom: 2px solid #d8dbe0; padding: 16px 0 0 16px; }
.tree-tools { display: flex; justify-content: space-between; }
.btn-folder { width: 210px; height: 56px; border: 2px solid #3f6ad8; border-radius: 6px; color: #3f6ad8; font-size: 24px; padding-left: 32px; }
.btn-folder span { margin-left: 16px; }
.btn-collapse { width: 48px; height: 56px; border: 2px solid #d8dbe0; border-right: 0; background: #ebedef; color: #4f5d73; padding: 0 0 4px 14px; }
.search { display: flex; margin-top: 16px; width: 526px; height: 64px; }
.search-ic { width: 81px; border: 2px solid #d8dbe0; border-radius: 8px; display: flex; justify-content: center; padding-top: 15px; color: #636f83; }
.search-in { flex: 1; border: 2px solid #d8dbe0; border-left-width: 1px; border-radius: 0 8px 8px 0; padding: 12px 0 0 16px; color: #8a93a2; line-height: 40px; letter-spacing: .25px; }
.t-row { height: 78px; display: flex; align-items: center; color: #636f83; margin-top: 13px; }
.t-chev { margin-left: 61px; margin-top: -2px; color: #4f5d73; }
.t-folder { margin-left: 37px; color: #fab115; }
.t-name { margin: 2px 0 0 16px; width: 284px; }
.t-name.wide { letter-spacing: .25px; }
.t-cog { color: #ced2d8; }
.t-trash { margin-left: 19px; color: #e55353; }
.t-row.sel { margin: -1px 0 0 42px; height: 78px; border: 2px solid #e4e8ee; border-left: 6px solid #0d7dfa; border-right: 0; background: #d8e7f8; padding-left: 32px; }
.t-open { color: #39f; }
.sel .t-name { width: 327px; margin-left: 15px; }

/* work area */
.work { flex: 1; min-width: 0; }
.path { margin: 48px 48px 0; height: 74px; border: 2px solid #d8dbe0; border-radius: 8px; background: #ebedef; display: flex; align-items: center; padding: 0 0 2px 32px; font-size: 22px; letter-spacing: .15px; color: #768192; }
.path b { font-weight: 400; color: #636f83; }
.path svg { transform: scaleX(-1); margin: 2px 11px 0; color: #636f83; }
.title-row { margin: 32px 56px 0 48px; height: 56px; display: flex; align-items: center; }
h1 { margin: 0 auto 0 0; font-size: 39px; font-weight: 700; letter-spacing: -.15px; color: #2c3e50; }
.sm { height: 56px; border: 2px solid; border-radius: 6px; font-size: 24px; padding-left: 32px; }
.sm span { margin-left: 16px; }
.upload { width: 190px; background: #3f6ad8; border-color: #3f6ad8; color: #fff; }
.upload span { width: 80px; }
.upload .caret { margin-left: 8px; }
.gray { width: 188px; color: #636f83; margin: 0 16px 0 8px; }
.red { width: 164px; color: #e55353; }
.tabs { margin: 32px 28px 0; height: 78px; border-bottom: 2px solid #d8dbe0; display: grid; grid-template-columns: 412px 345px 203px 400px; letter-spacing: -.15px; }
.tab { display: flex; align-items: center; height: 76px; padding: 4px 0 0 50px; color: #3f6ad8; white-space: nowrap; }
.tab:nth-child(2) { letter-spacing: -.3px; }
.tab:last-child { letter-spacing: 0; }
.tab svg { margin-right: 17px; }
.tab.on { height: 78px; border: 2px solid #c4c9d0; border-bottom: 0; border-radius: 8px 8px 0 0; background: #ebedef; color: #768192; padding: 1px 0 0 48px; }
.subtabs { margin: 64px 48px 0; height: 68px; border-bottom: 2px solid #d8dbe0; padding-left: 49px; display: grid; grid-template-columns: 283px 253px 345px 310px 400px; font-size: 24px; font-weight: 500; letter-spacing: -.2px; }
.subtabs a { display: flex; align-items: center; white-space: nowrap; padding-top: 2px; }
.subtabs svg { margin-right: 18px; }
.subtabs .on { color: #3f6ad8; font-weight: 600; letter-spacing: .3px; }
.rule { margin: 32px 48px 0; height: 2px; background: #d8dbe0; }
.actions { margin: 46px 42px 0 0; height: 74px; display: flex; justify-content: flex-end; align-items: center; }
.act { height: 70px; border: 2px solid #636f83; border-radius: 8px; color: #636f83; padding: 3px 0 0 40px; }
.act span { margin-left: 16px; }
.act svg { margin-top: -5px; }
.report { width: 278px; margin-right: 32px; }
.tutorial { width: 204px; margin-right: 24px; }
.act.dl { width: 312px; height: 74px; border: 0; background: #3f6ad8; color: #fff; font-size: 28px; font-weight: 700; letter-spacing: .75px; padding: 3px 0 0 27px; }
.dl span { margin-left: 8px; }

.filters { display: flex; margin-top: 60px; height: 136px; color: #636f83; }
.f-doc { margin-left: 80px; width: 844px; }
.f-acc { width: 828px; margin-right: 44px; }
.f-per { width: 874px; }
.f-label { height: 48px; display: flex; align-items: center; }
.f-doc strong { width: 408px; }
.f-acc strong { width: 380px; }
.f-per strong { width: 354px; }
.cb { margin: -2px 16px 0 42px; width: 26px; height: 26px; border-radius: 4px; background: #0075ff; color: #fff; display: flex; align-items: center; justify-content: center; }
.latest { font-size: 24px; letter-spacing: .35px; margin-top: -5px; }
.f-line { display: flex; align-items: center; margin-top: 12px; }
.select { position: relative; width: 100%; height: 76px; border: 2px solid #ccc; border-radius: 8px; display: flex; align-items: center; padding-left: 18px; flex: none; }
.acc { width: 250px; letter-spacing: .15px; }
.per { width: 346px; letter-spacing: .4px; }
.f-doc .select { width: 700px; }
.f-per .select { margin-top: -4px; }
.sep { margin-left: auto; width: 2px; height: 40px; background: #ccc; }
.s-chev { margin: 0 24px; color: #ccc; }
.del { margin-left: 34px; color: #3f6ad8; }
.dot { position: absolute; left: 198px; top: -14px; width: 60px; height: 60px; border-radius: 50%; background: #e03131; }
.tip { position: absolute; left: 160px; top: 6px; width: 272px; height: 62px; border: 4px solid #e03131; border-radius: 8px; background: #fff; color: #212529; font-size: 25.500px; letter-spacing: .25px; font-weight: 600; line-height: 54px; text-align: center; white-space: nowrap; box-shadow: 0 4px 16px rgba(0,0,0,.3); }
.rename { margin-left: auto; display: flex; align-items: center; gap: 10px; color: #3f6ad8; padding-top: 4px; }
.rename svg { margin-top: -4px; }
.badge { font-style: normal; font-weight: 700; font-size: 20.500px; letter-spacing: .3px; background: #39f; color: #fff; height: 36px; width: 179px; border-radius: 8px; margin-left: 18px; padding: 2px 0 0 8px; display: flex; align-items: center; line-height: 34px; }
.badge svg { margin-right: 15px; }

.summary { display: flex; color: #636f83; height: 141px; padding-top: 17px; }
.s-col div { display: flex; align-items: center; height: 62px; }
.s-col.a { margin-left: 52px; width: 389px; }
.s-col.b { width: 565px; margin-top: -1px; }
.s-col.b div { justify-content: space-between; height: 60px; }
.s-col.c { margin-left: 70px; }
.s-col u { margin: 1px 16px 0 27px; }
.s-col svg { margin-top: -4px; }
.s-col.b strong { letter-spacing: .45px; }
.green { color: #2eb85c; }
.redt { color: #e55353; }

.lower { display: flex; margin: 95px 0 0 1072px; height: 838px; }
.gutter { width: 20px; background: #eee; }
.grid-side { width: 1594px; margin-left: 18px; flex: none; }
.g-top { display: flex; height: 154px; }
.filter-by { width: 890px; color: #636f83; }
.fb-label { height: 42px; line-height: 44px; }
.chips { display: flex; flex-wrap: wrap; width: 800px; gap: 0 16px; }
.chips button { height: 56px; border: 2px solid #636f83; border-radius: 6px; font-size: 24px; justify-content: center; }
.w1 { width: 192px; } .w2 { width: 168px; } .w3 { width: 126px; } .w4 { width: 90px; } .w5 { width: 110px; } .w6 { width: 126px; } .w7 { width: 208px; }
.lt { height: 70px; border-radius: 8px; background: #ebedef; color: #4f5d73; padding: 2px 0 0 26px; letter-spacing: -.1px; }
.lt svg { margin: -4px 8px 0 0; }
.off { background: #f1f3f5; color: #8a93a2; }
.conf { width: 344px; margin-right: 32px; }
.conf svg { margin-right: 16px; }
.addt { width: 294px; }
.g-sel { display: flex; gap: 16px; margin: 24px 0 8px 8px; }
.all { width: 378px; } .clr { width: 274px; }
.g-bulk { display: flex; margin-bottom: 16px; }
.asg { width: 418px; margin-right: 8px; letter-spacing: -.3px; } .swc { width: 358px; margin-right: 16px; } .swi { width: 418px; }

.table { width: 1576px; border: 2px solid #babfc7; color: #181d1f; }
.tr { display: grid; grid-template-columns: 98px 200px 150px 400px 400px 324px; height: 84px; border-bottom: 2px solid #dde2eb; background: #fff; }
.tr.odd { background: #fcfcfc; }
.tr.th { height: 98px; background: #f8f8f8; border-bottom-color: #babfc7; font-size: 25.400px; letter-spacing: .1px; font-weight: 700; }
.th div { display: flex; align-items: center; padding: 2px 0 0 37px; }
.th i { width: 4px; height: 28px; margin: -2px -2px 0 auto; background: #dde2eb; }
.c0 { padding: 28px 0 0 35px; }
.box { width: 32px; height: 32px; border: 4px solid #999; border-radius: 6px; background: #fff; }
.c1 { padding: 30px 0 0 42px; }
.toggle { position: relative; width: 60px; height: 20px; border-radius: 10px; background: #86d3ff; }
.toggle::after { content: ""; position: absolute; right: -6px; top: -6px; width: 30px; height: 30px; border-radius: 50%; background: #2693e6; box-shadow: 0 2px 8px rgba(0,0,0,.5); }
.c2 { padding: 24px 0 0 38px; }
.c3 { display: flex; align-items: flex-start; padding: 42px 44px 0 47px; white-space: nowrap; }
.c3 svg { margin: -2px 0 0 auto; }
.c3 span { line-height: 25px; }
.payee u { letter-spacing: -.1px; }
.payee { letter-spacing: -.2px; }
.c3.empty svg { margin-top: -30px; }

.chat { position: absolute; left: 3680px; top: 2000px; width: 120px; height: 120px; border-radius: 50%; background: #0566d0; box-shadow: 0 6px 24px rgba(0,0,0,.25); display: flex; align-items: center; justify-content: center; }
```
